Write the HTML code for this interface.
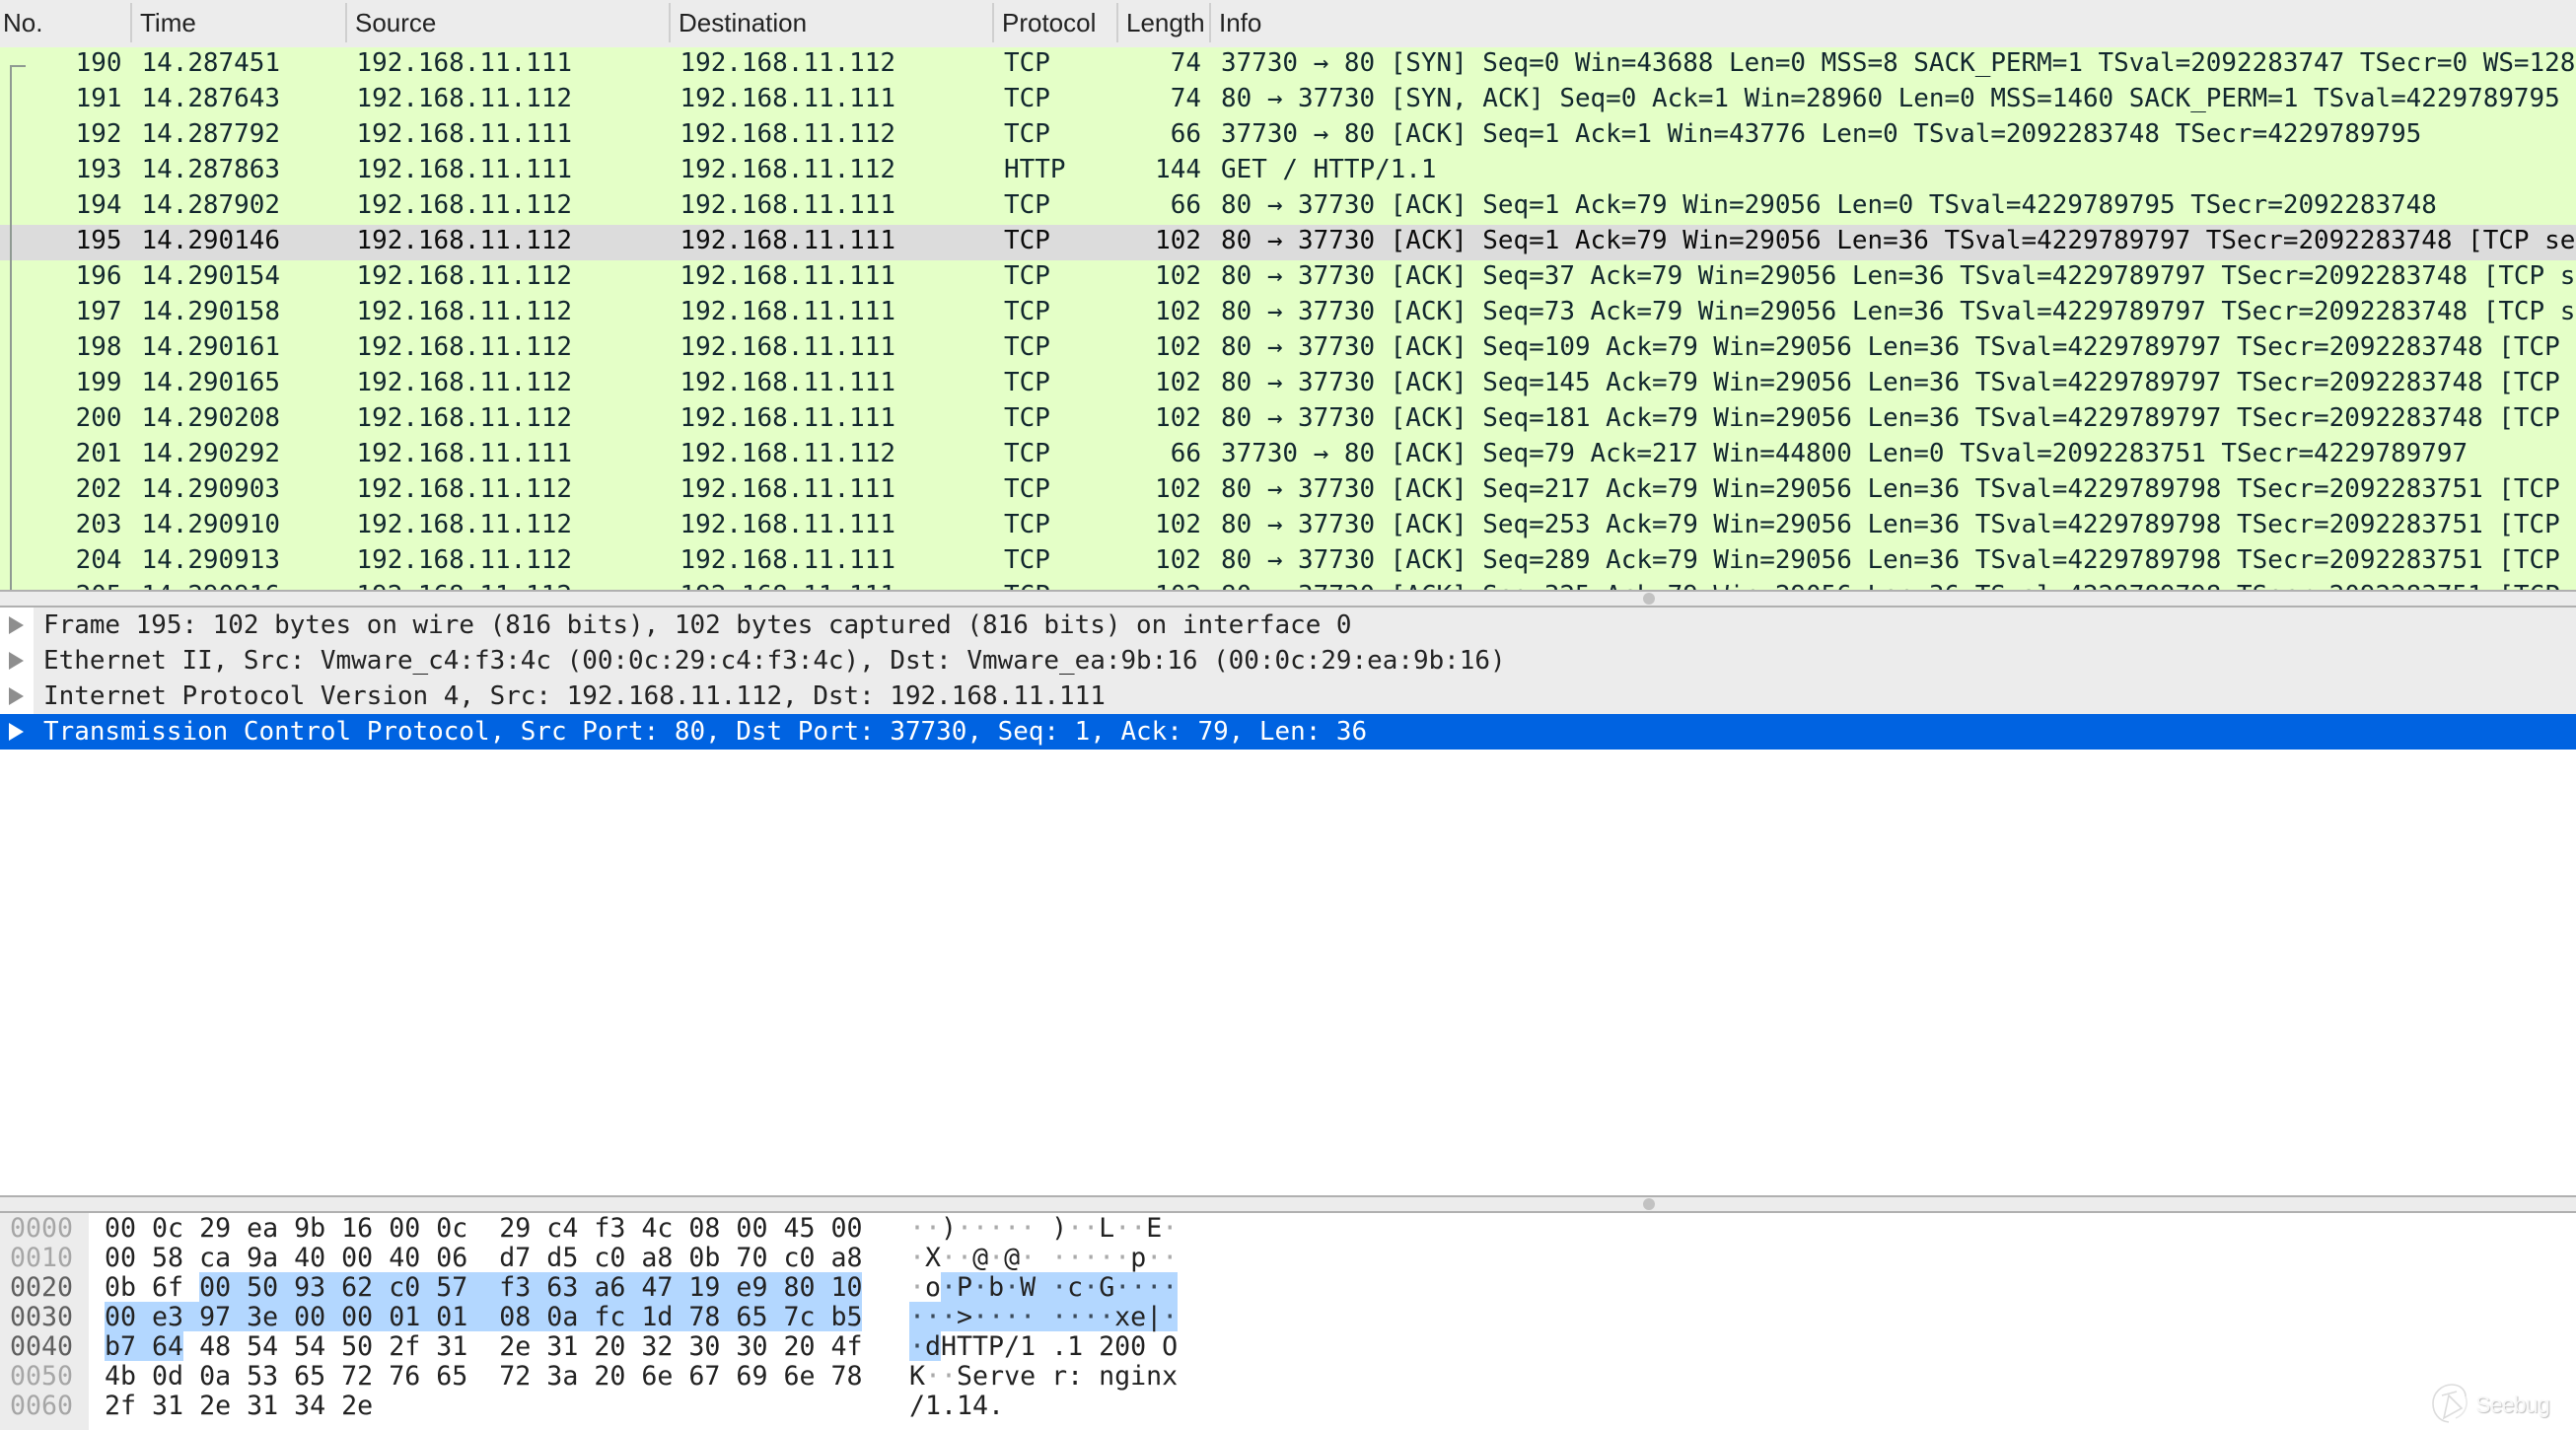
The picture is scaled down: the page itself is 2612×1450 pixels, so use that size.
<!DOCTYPE html>
<html>
<head>
<meta charset="utf-8">
<style>
html,body{margin:0;padding:0;background:#fff}
body{position:relative;width:2612px;height:1450px;overflow:hidden}
div{position:absolute;white-space:pre}
.m{font-family:"DejaVu Sans Mono","Liberation Mono",monospace;font-size:25.93px;line-height:36px}
.hdr{left:0;top:0;width:2612px;height:48px;background:#ececec}
.h{font-family:"Liberation Sans",sans-serif;font-size:26px;line-height:46px;top:0;color:#222}
.s{top:3px;width:2px;height:40px;background:#cfcfcf}
#list{left:0;top:48px;width:2612px;height:550px;overflow:hidden;background:#e4ffc7}
.r{left:0;width:2612px;height:36px;color:#12272e}
.r.sel{background:#dcdcdc;color:#0c0c0c}
.r div{top:-2px}
.n{right:2488.5px;text-align:right}.t{left:143.5px}.a{left:361.5px}.b{left:689.5px}.p{left:1018px}
.l{right:1394px;text-align:right}.i{left:1238px}
.line{left:0;width:2612px;height:2px;background:#b0b0b0}
.split{left:0;width:2612px;height:14px;background:#ececec}
.dot{width:12px;height:12px;border-radius:50%;background:#c2c2c2}
.d{left:34px;width:2578px;height:36px;background:#ececec;color:#222}
.d span{position:absolute;left:10px;top:0}
.tri{left:9px;width:0;height:0;border-left:15px solid #8e8e8e;border-top:9px solid transparent;border-bottom:9px solid transparent}
.hx{font-family:"DejaVu Sans Mono","Liberation Mono",monospace;font-size:26.6px;line-height:32px;color:#222;height:30px}
.o{left:10px;color:#5f5f5f}.o.g{color:#a6a6a6}
.x{left:106px}.c{left:922px}
.c i{font-style:normal;color:#aaa}
.sl{background:#b3d7ff;height:30px}
.c .k{color:#222}
</style>
</head>
<body>
<div class="hdr"></div>
<div class="h" style="left:3px">No.</div><div class="s" style="left:132px"></div>
<div class="h" style="left:142px">Time</div><div class="s" style="left:350px"></div>
<div class="h" style="left:360px">Source</div><div class="s" style="left:678px"></div>
<div class="h" style="left:688px">Destination</div><div class="s" style="left:1006px"></div>
<div class="h" style="left:1016px">Protocol</div><div class="s" style="left:1132px"></div>
<div class="h" style="left:1142px">Length</div><div class="s" style="left:1226px"></div>
<div class="h" style="left:1236px">Info</div>

<div id="list" class="m">
<div class="r" style="top:0"><div class="n">190</div><div class="t">14.287451</div><div class="a">192.168.11.111</div><div class="b">192.168.11.112</div><div class="p">TCP</div><div class="l">74</div><div class="i">37730 → 80 [SYN] Seq=0 Win=43688 Len=0 MSS=8 SACK_PERM=1 TSval=2092283747 TSecr=0 WS=128</div></div>
<div class="r" style="top:36px"><div class="n">191</div><div class="t">14.287643</div><div class="a">192.168.11.112</div><div class="b">192.168.11.111</div><div class="p">TCP</div><div class="l">74</div><div class="i">80 → 37730 [SYN, ACK] Seq=0 Ack=1 Win=28960 Len=0 MSS=1460 SACK_PERM=1 TSval=4229789795</div></div>
<div class="r" style="top:72px"><div class="n">192</div><div class="t">14.287792</div><div class="a">192.168.11.111</div><div class="b">192.168.11.112</div><div class="p">TCP</div><div class="l">66</div><div class="i">37730 → 80 [ACK] Seq=1 Ack=1 Win=43776 Len=0 TSval=2092283748 TSecr=4229789795</div></div>
<div class="r" style="top:108px"><div class="n">193</div><div class="t">14.287863</div><div class="a">192.168.11.111</div><div class="b">192.168.11.112</div><div class="p">HTTP</div><div class="l">144</div><div class="i">GET / HTTP/1.1</div></div>
<div class="r" style="top:144px"><div class="n">194</div><div class="t">14.287902</div><div class="a">192.168.11.112</div><div class="b">192.168.11.111</div><div class="p">TCP</div><div class="l">66</div><div class="i">80 → 37730 [ACK] Seq=1 Ack=79 Win=29056 Len=0 TSval=4229789795 TSecr=2092283748</div></div>
<div class="r sel" style="top:180px"><div class="n">195</div><div class="t">14.290146</div><div class="a">192.168.11.112</div><div class="b">192.168.11.111</div><div class="p">TCP</div><div class="l">102</div><div class="i">80 → 37730 [ACK] Seq=1 Ack=79 Win=29056 Len=36 TSval=4229789797 TSecr=2092283748 [TCP segment</div></div>
<div class="r" style="top:216px"><div class="n">196</div><div class="t">14.290154</div><div class="a">192.168.11.112</div><div class="b">192.168.11.111</div><div class="p">TCP</div><div class="l">102</div><div class="i">80 → 37730 [ACK] Seq=37 Ack=79 Win=29056 Len=36 TSval=4229789797 TSecr=2092283748 [TCP segment</div></div>
<div class="r" style="top:252px"><div class="n">197</div><div class="t">14.290158</div><div class="a">192.168.11.112</div><div class="b">192.168.11.111</div><div class="p">TCP</div><div class="l">102</div><div class="i">80 → 37730 [ACK] Seq=73 Ack=79 Win=29056 Len=36 TSval=4229789797 TSecr=2092283748 [TCP segment</div></div>
<div class="r" style="top:288px"><div class="n">198</div><div class="t">14.290161</div><div class="a">192.168.11.112</div><div class="b">192.168.11.111</div><div class="p">TCP</div><div class="l">102</div><div class="i">80 → 37730 [ACK] Seq=109 Ack=79 Win=29056 Len=36 TSval=4229789797 TSecr=2092283748 [TCP</div></div>
<div class="r" style="top:324px"><div class="n">199</div><div class="t">14.290165</div><div class="a">192.168.11.112</div><div class="b">192.168.11.111</div><div class="p">TCP</div><div class="l">102</div><div class="i">80 → 37730 [ACK] Seq=145 Ack=79 Win=29056 Len=36 TSval=4229789797 TSecr=2092283748 [TCP</div></div>
<div class="r" style="top:360px"><div class="n">200</div><div class="t">14.290208</div><div class="a">192.168.11.112</div><div class="b">192.168.11.111</div><div class="p">TCP</div><div class="l">102</div><div class="i">80 → 37730 [ACK] Seq=181 Ack=79 Win=29056 Len=36 TSval=4229789797 TSecr=2092283748 [TCP</div></div>
<div class="r" style="top:396px"><div class="n">201</div><div class="t">14.290292</div><div class="a">192.168.11.111</div><div class="b">192.168.11.112</div><div class="p">TCP</div><div class="l">66</div><div class="i">37730 → 80 [ACK] Seq=79 Ack=217 Win=44800 Len=0 TSval=2092283751 TSecr=4229789797</div></div>
<div class="r" style="top:432px"><div class="n">202</div><div class="t">14.290903</div><div class="a">192.168.11.112</div><div class="b">192.168.11.111</div><div class="p">TCP</div><div class="l">102</div><div class="i">80 → 37730 [ACK] Seq=217 Ack=79 Win=29056 Len=36 TSval=4229789798 TSecr=2092283751 [TCP</div></div>
<div class="r" style="top:468px"><div class="n">203</div><div class="t">14.290910</div><div class="a">192.168.11.112</div><div class="b">192.168.11.111</div><div class="p">TCP</div><div class="l">102</div><div class="i">80 → 37730 [ACK] Seq=253 Ack=79 Win=29056 Len=36 TSval=4229789798 TSecr=2092283751 [TCP</div></div>
<div class="r" style="top:504px"><div class="n">204</div><div class="t">14.290913</div><div class="a">192.168.11.112</div><div class="b">192.168.11.111</div><div class="p">TCP</div><div class="l">102</div><div class="i">80 → 37730 [ACK] Seq=289 Ack=79 Win=29056 Len=36 TSval=4229789798 TSecr=2092283751 [TCP</div></div>
<div class="r" style="top:540px"><div class="n">205</div><div class="t">14.290916</div><div class="a">192.168.11.112</div><div class="b">192.168.11.111</div><div class="p">TCP</div><div class="l">102</div><div class="i">80 → 37730 [ACK] Seq=325 Ack=79 Win=29056 Len=36 TSval=4229789798 TSecr=2092283751 [TCP</div></div>
<div style="left:10px;top:18px;width:2px;height:532px;background:#8f9a92"></div>
<div style="left:10px;top:18px;width:16px;height:2px;background:#8f9a92"></div>
</div>

<div class="line" style="top:598px"></div>
<div class="split" style="top:600px"></div>
<div class="dot" style="left:1666px;top:601px"></div>
<div class="line" style="top:614px"></div>

<div class="m d" style="top:616px"><span>Frame 195: 102 bytes on wire (816 bits), 102 bytes captured (816 bits) on interface 0</span></div>
<div class="m d" style="top:652px"><span>Ethernet II, Src: Vmware_c4:f3:4c (00:0c:29:c4:f3:4c), Dst: Vmware_ea:9b:16 (00:0c:29:ea:9b:16)</span></div>
<div class="m d" style="top:688px"><span>Internet Protocol Version 4, Src: 192.168.11.112, Dst: 192.168.11.111</span></div>
<div class="m d" style="top:724px;left:0;width:2612px;background:#0063e1;color:#fff"><span style="left:44px">Transmission Control Protocol, Src Port: 80, Dst Port: 37730, Seq: 1, Ack: 79, Len: 36</span></div>
<div class="tri" style="top:625px"></div>
<div class="tri" style="top:661px"></div>
<div class="tri" style="top:697px"></div>
<div class="tri" style="top:733px;border-left-color:#fff"></div>

<div class="line" style="top:1212px"></div>
<div class="split" style="top:1214px"></div>
<div class="dot" style="left:1666px;top:1215px"></div>
<div class="line" style="top:1228px"></div>

<div style="left:0;top:1230px;width:90px;height:220px;background:#ececec"></div>
<div class="sl" style="left:202px;top:1290px;width:672px"></div>
<div class="sl" style="left:106px;top:1320px;width:768px"></div>
<div class="sl" style="left:106px;top:1350px;width:80px"></div>
<div class="sl" style="left:954px;top:1290px;width:240px"></div>
<div class="sl" style="left:922px;top:1320px;width:272px"></div>
<div class="sl" style="left:922px;top:1350px;width:32px"></div>

<div class="hx o g" style="top:1230px">0000</div>
<div class="hx o g" style="top:1260px">0010</div>
<div class="hx o" style="top:1290px">0020</div>
<div class="hx o" style="top:1320px">0030</div>
<div class="hx o" style="top:1350px">0040</div>
<div class="hx o g" style="top:1380px">0050</div>
<div class="hx o g" style="top:1410px">0060</div>

<div class="hx x" style="top:1230px">00 0c 29 ea 9b 16 00 0c  29 c4 f3 4c 08 00 45 00</div>
<div class="hx x" style="top:1260px">00 58 ca 9a 40 00 40 06  d7 d5 c0 a8 0b 70 c0 a8</div>
<div class="hx x" style="top:1290px">0b 6f 00 50 93 62 c0 57  f3 63 a6 47 19 e9 80 10</div>
<div class="hx x" style="top:1320px">00 e3 97 3e 00 00 01 01  08 0a fc 1d 78 65 7c b5</div>
<div class="hx x" style="top:1350px">b7 64 48 54 54 50 2f 31  2e 31 20 32 30 30 20 4f</div>
<div class="hx x" style="top:1380px">4b 0d 0a 53 65 72 76 65  72 3a 20 6e 67 69 6e 78</div>
<div class="hx x" style="top:1410px">2f 31 2e 31 34 2e</div>

<div class="hx c" style="top:1230px"><i>··</i>)<i>·····</i> )<i>··</i>L<i>··</i>E<i>·</i></div>
<div class="hx c" style="top:1260px"><i>·</i>X<i>··</i>@<i>·</i>@<i>·</i> <i>·····</i>p<i>··</i></div>
<div class="hx c" style="top:1290px"><i>·</i>o<span style="color:#3a4a5a">·</span>P<span style="color:#3a4a5a">·</span>b<span style="color:#3a4a5a">·</span>W <span style="color:#3a4a5a">·</span>c<span style="color:#3a4a5a">·</span>G<span style="color:#3a4a5a">····</span></div>
<div class="hx c" style="top:1320px"><span style="color:#3a4a5a">···</span>&gt;<span style="color:#3a4a5a">····</span> <span style="color:#3a4a5a">····</span>xe|<span style="color:#3a4a5a">·</span></div>
<div class="hx c" style="top:1350px"><span style="color:#3a4a5a">·</span>dHTTP/1 .1 200 O</div>
<div class="hx c" style="top:1380px">K<i>··</i>Serve r: nginx</div>
<div class="hx c" style="top:1410px">/1.14.</div>

<svg style="position:absolute;left:2462px;top:1398px" width="46" height="50" viewBox="0 0 46 50">
<g fill="none" stroke="#dcdcdc" stroke-width="1.6">
<path d="M21 44C11 43 5 35 5 25C5 14 14 6 24 6C32 6 38 11 38 18"/>
<path d="M14 17L29 13"/>
<path d="M21 17L16 40L34 30Z"/>
<path d="M38 18C41 26 38 36 28 40" stroke="#e8e8e8"/>
</g>
</svg>
<div style="left:2510px;top:1408px;font-family:'Liberation Sans',sans-serif;font-size:23px;line-height:32px;letter-spacing:-.7px;color:#f7f7f7;text-shadow:1px 1px 1px #bdbdbd">Seebug</div>
</body>
</html>
